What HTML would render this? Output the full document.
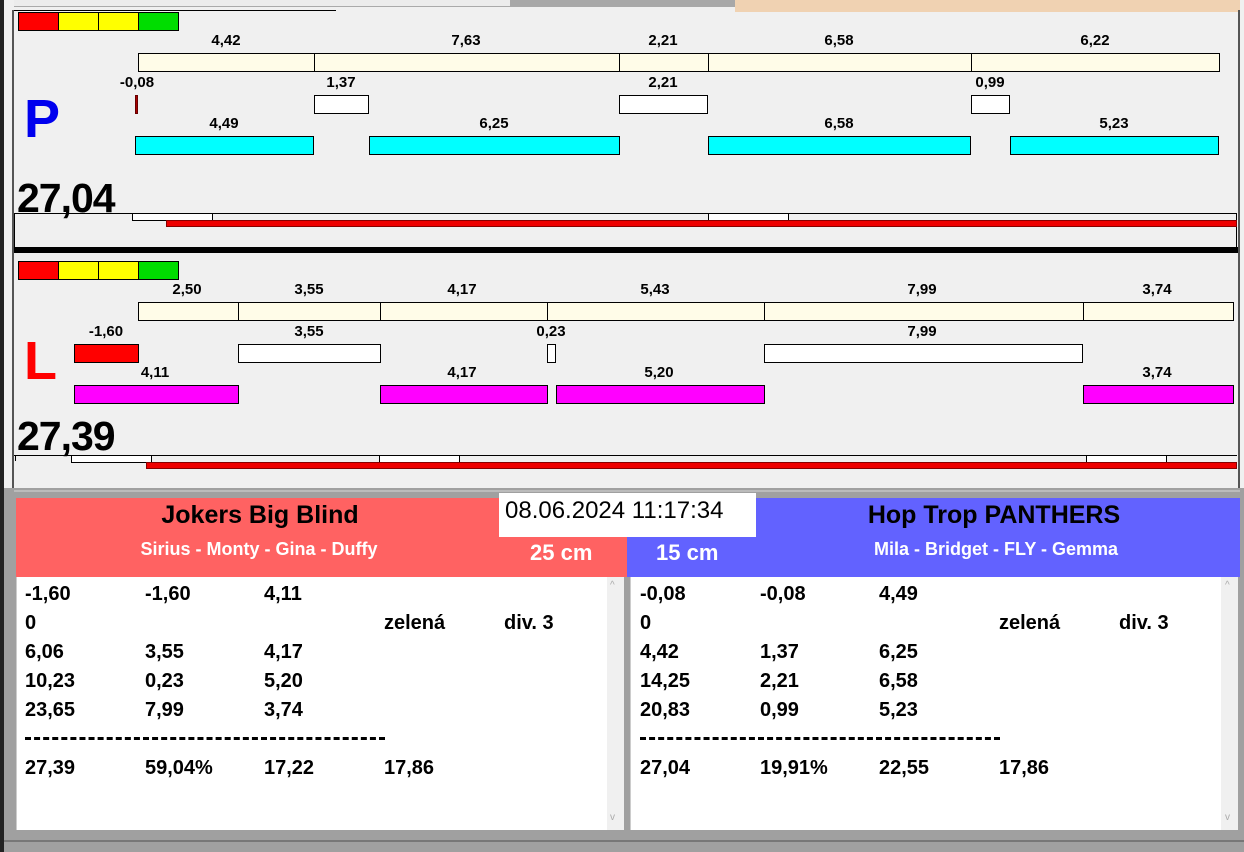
<!DOCTYPE html>
<html><head><meta charset="utf-8"><style>
*{margin:0;padding:0;box-sizing:border-box}
body{width:1244px;height:852px;background:#f0f0f0;position:relative;overflow:hidden;font-family:"Liberation Sans",sans-serif}
div{position:absolute}
.b{border:1px solid #000}
.cr{background:#fffce8}
.w{background:#fff}
.cy{background:#00ffff}
.mg{background:#ff00ff}
.lb{font-weight:bold;font-size:15px;color:#000;transform:translateX(-50%);white-space:nowrap}
.big{font-weight:bold;font-size:41px;color:#000;letter-spacing:-1px;line-height:1}
.t{font-weight:bold;font-size:20px;color:#000;white-space:nowrap}
</style></head><body>
<!-- top strip -->
<div style="left:0;top:0;width:1244px;height:12px;background:#f0f0f0"></div>
<div style="left:110px;top:0;width:625px;height:7px;background:#a8a8a8"></div>
<div style="left:14px;top:0;width:496px;height:7px;background:#ececec;border-bottom:1px solid #aaa"></div>
<div style="left:14px;top:10px;width:322px;height:1px;background:#000"></div>
<div style="left:735px;top:0;width:505px;height:12px;background:#f0d2b2"></div>
<!-- left border -->
<div style="left:0;top:0;width:4px;height:852px;background:#222"></div>
<div style="left:12px;top:10px;width:2px;height:480px;background:#555"></div>
<div style="left:1238px;top:10px;width:2px;height:480px;background:#555"></div>

<!-- P panel -->
<div class="b" style="left:18px;top:12px;width:41px;height:19px;background:#f00"></div>
<div class="b" style="left:58px;top:12px;width:41px;height:19px;background:#ff0"></div>
<div class="b" style="left:98px;top:12px;width:41px;height:19px;background:#ff0"></div>
<div class="b" style="left:138px;top:12px;width:41px;height:19px;background:#0d0"></div>

<div class="lb" style="left:226px;top:32px">4,42</div>
<div class="lb" style="left:466px;top:32px">7,63</div>
<div class="lb" style="left:663px;top:32px">2,21</div>
<div class="lb" style="left:839px;top:32px">6,58</div>
<div class="lb" style="left:1095px;top:32px">6,22</div>
<div class="b cr" style="left:138px;top:53px;width:177px;height:19px"></div>
<div class="b cr" style="left:314px;top:53px;width:306px;height:19px"></div>
<div class="b cr" style="left:619px;top:53px;width:90px;height:19px"></div>
<div class="b cr" style="left:708px;top:53px;width:264px;height:19px"></div>
<div class="b cr" style="left:971px;top:53px;width:249px;height:19px"></div>

<div class="lb" style="left:137px;top:74px">-0,08</div>
<div class="lb" style="left:341px;top:74px">1,37</div>
<div class="lb" style="left:663px;top:74px">2,21</div>
<div class="lb" style="left:990px;top:74px">0,99</div>
<div style="left:135px;top:95px;width:3px;height:19px;background:#a00;border:1px solid #600"></div>
<div class="b w" style="left:314px;top:95px;width:55px;height:19px"></div>
<div class="b w" style="left:619px;top:95px;width:89px;height:19px"></div>
<div class="b w" style="left:971px;top:95px;width:39px;height:19px"></div>

<div class="lb" style="left:224px;top:115px">4,49</div>
<div class="lb" style="left:494px;top:115px">6,25</div>
<div class="lb" style="left:839px;top:115px">6,58</div>
<div class="lb" style="left:1114px;top:115px">5,23</div>
<div class="b cy" style="left:135px;top:136px;width:179px;height:19px"></div>
<div class="b cy" style="left:369px;top:136px;width:251px;height:19px"></div>
<div class="b cy" style="left:708px;top:136px;width:263px;height:19px"></div>
<div class="b cy" style="left:1010px;top:136px;width:209px;height:19px"></div>

<div style="left:24px;top:92px;font-weight:bold;font-size:54px;color:#0000ee;line-height:1">P</div>
<div class="big" style="left:17px;top:178px">27,04</div>
<div style="left:14px;top:213px;width:1223px;height:35px;border:1px solid #000;border-bottom:none"></div>
<div class="b w" style="left:132px;top:213px;width:81px;height:8px"></div>
<div class="b w" style="left:708px;top:213px;width:81px;height:8px"></div>
<div style="left:166px;top:220px;width:1071px;height:7px;background:#e00;border:1px solid #800"></div>
<div style="left:14px;top:247px;width:1224px;height:6px;background:#000"></div>

<!-- L panel -->
<div class="b" style="left:18px;top:261px;width:41px;height:19px;background:#f00"></div>
<div class="b" style="left:58px;top:261px;width:41px;height:19px;background:#ff0"></div>
<div class="b" style="left:98px;top:261px;width:41px;height:19px;background:#ff0"></div>
<div class="b" style="left:138px;top:261px;width:41px;height:19px;background:#0d0"></div>

<div class="lb" style="left:187px;top:281px">2,50</div>
<div class="lb" style="left:309px;top:281px">3,55</div>
<div class="lb" style="left:462px;top:281px">4,17</div>
<div class="lb" style="left:655px;top:281px">5,43</div>
<div class="lb" style="left:922px;top:281px">7,99</div>
<div class="lb" style="left:1157px;top:281px">3,74</div>
<div class="b cr" style="left:138px;top:302px;width:101px;height:19px"></div>
<div class="b cr" style="left:238px;top:302px;width:143px;height:19px"></div>
<div class="b cr" style="left:380px;top:302px;width:168px;height:19px"></div>
<div class="b cr" style="left:547px;top:302px;width:218px;height:19px"></div>
<div class="b cr" style="left:764px;top:302px;width:320px;height:19px"></div>
<div class="b cr" style="left:1083px;top:302px;width:151px;height:19px"></div>

<div class="lb" style="left:106px;top:323px">-1,60</div>
<div class="lb" style="left:309px;top:323px">3,55</div>
<div class="lb" style="left:551px;top:323px">0,23</div>
<div class="lb" style="left:922px;top:323px">7,99</div>
<div class="b" style="left:74px;top:344px;width:65px;height:19px;background:#f00"></div>
<div class="b w" style="left:238px;top:344px;width:143px;height:19px"></div>
<div class="b w" style="left:547px;top:344px;width:9px;height:19px"></div>
<div class="b w" style="left:764px;top:344px;width:319px;height:19px"></div>

<div class="lb" style="left:155px;top:364px">4,11</div>
<div class="lb" style="left:462px;top:364px">4,17</div>
<div class="lb" style="left:659px;top:364px">5,20</div>
<div class="lb" style="left:1157px;top:364px">3,74</div>
<div class="b mg" style="left:74px;top:385px;width:165px;height:19px"></div>
<div class="b mg" style="left:380px;top:385px;width:168px;height:19px"></div>
<div class="b mg" style="left:556px;top:385px;width:209px;height:19px"></div>
<div class="b mg" style="left:1083px;top:385px;width:151px;height:19px"></div>

<div style="left:24px;top:334px;font-size:54px;color:#f00;line-height:1;font-weight:bold">L</div>
<div class="big" style="left:17px;top:416px">27,39</div>
<div style="left:14px;top:455px;width:1223px;height:1px;background:#000"></div>
<div style="left:15px;top:455px;width:1px;height:6px;background:#000"></div>
<div class="b w" style="left:71px;top:455px;width:81px;height:8px"></div>
<div class="b w" style="left:379px;top:455px;width:81px;height:8px"></div>
<div class="b w" style="left:1086px;top:455px;width:81px;height:8px"></div>
<div style="left:146px;top:462px;width:1091px;height:7px;background:#e00;border:1px solid #800"></div>

<!-- bottom -->
<div style="left:4px;top:488px;width:1240px;height:364px;background:#a0a0a0"></div>
<div style="left:14px;top:490px;width:1226px;height:2px;background:#bbb"></div>
<div style="left:16px;top:498px;width:611px;height:79px;background:#ff6262"></div>
<div style="left:627px;top:498px;width:613px;height:79px;background:#6262ff"></div>
<div style="left:499px;top:493px;width:257px;height:44px;background:#fff"></div>
<div style="left:505px;top:497px;font-size:24px;color:#000">08.06.2024 11:17:34</div>
<div style="left:260px;top:501px;transform:translateX(-50%);font-weight:bold;font-size:25px;white-space:nowrap">Jokers Big Blind</div>
<div style="left:259px;top:539px;transform:translateX(-50%);font-weight:bold;font-size:18px;color:#fff;white-space:nowrap">Sirius - Monty - Gina - Duffy</div>
<div style="left:530px;top:540px;font-weight:bold;font-size:22px;color:#fff">25 cm</div>
<div style="left:994px;top:501px;transform:translateX(-50%);font-weight:bold;font-size:25px;white-space:nowrap">Hop Trop PANTHERS</div>
<div style="left:996px;top:539px;transform:translateX(-50%);font-weight:bold;font-size:18px;color:#fff;white-space:nowrap">Mila - Bridget - FLY - Gemma</div>
<div style="left:656px;top:540px;font-weight:bold;font-size:22px;color:#fff">15 cm</div>

<div style="left:16px;top:577px;width:608px;height:253px;background:#fff;border-left:1px solid #ccc"></div>
<div style="left:607px;top:577px;width:17px;height:253px;background:#f0f0f0"></div>
<div style="left:630px;top:577px;width:608px;height:253px;background:#fff;border-left:1px solid #ccc"></div>
<div style="left:1221px;top:577px;width:17px;height:253px;background:#f0f0f0"></div>
<div style="left:610px;top:580px;font-size:10px;color:#aaa">^</div>
<div style="left:610px;top:812px;font-size:10px;color:#aaa">v</div>
<div style="left:1225px;top:580px;font-size:10px;color:#aaa">^</div>
<div style="left:1225px;top:812px;font-size:10px;color:#aaa">v</div>
<div style="left:4px;top:840px;width:1240px;height:2px;background:#777"></div>

<!-- left list -->
<div class="t" style="left:25px;top:583px">-1,60</div><div class="t" style="left:145px;top:583px">-1,60</div><div class="t" style="left:264px;top:583px">4,11</div>
<div class="t" style="left:25px;top:612px">0</div><div class="t" style="left:384px;top:612px">zelená</div><div class="t" style="left:504px;top:612px">div. 3</div>
<div class="t" style="left:25px;top:641px">6,06</div><div class="t" style="left:145px;top:641px">3,55</div><div class="t" style="left:264px;top:641px">4,17</div>
<div class="t" style="left:25px;top:670px">10,23</div><div class="t" style="left:145px;top:670px">0,23</div><div class="t" style="left:264px;top:670px">5,20</div>
<div class="t" style="left:25px;top:699px">23,65</div><div class="t" style="left:145px;top:699px">7,99</div><div class="t" style="left:264px;top:699px">3,74</div>
<div style="left:25px;top:737px;width:360px;height:3px;border-top:3px dashed #000"></div>
<div class="t" style="left:25px;top:757px">27,39</div><div class="t" style="left:145px;top:757px">59,04%</div><div class="t" style="left:264px;top:757px">17,22</div><div class="t" style="left:384px;top:757px">17,86</div>

<!-- right list -->
<div class="t" style="left:640px;top:583px">-0,08</div><div class="t" style="left:760px;top:583px">-0,08</div><div class="t" style="left:879px;top:583px">4,49</div>
<div class="t" style="left:640px;top:612px">0</div><div class="t" style="left:999px;top:612px">zelená</div><div class="t" style="left:1119px;top:612px">div. 3</div>
<div class="t" style="left:640px;top:641px">4,42</div><div class="t" style="left:760px;top:641px">1,37</div><div class="t" style="left:879px;top:641px">6,25</div>
<div class="t" style="left:640px;top:670px">14,25</div><div class="t" style="left:760px;top:670px">2,21</div><div class="t" style="left:879px;top:670px">6,58</div>
<div class="t" style="left:640px;top:699px">20,83</div><div class="t" style="left:760px;top:699px">0,99</div><div class="t" style="left:879px;top:699px">5,23</div>
<div style="left:640px;top:737px;width:360px;height:3px;border-top:3px dashed #000"></div>
<div class="t" style="left:640px;top:757px">27,04</div><div class="t" style="left:760px;top:757px">19,91%</div><div class="t" style="left:879px;top:757px">22,55</div><div class="t" style="left:999px;top:757px">17,86</div>
</body></html>
